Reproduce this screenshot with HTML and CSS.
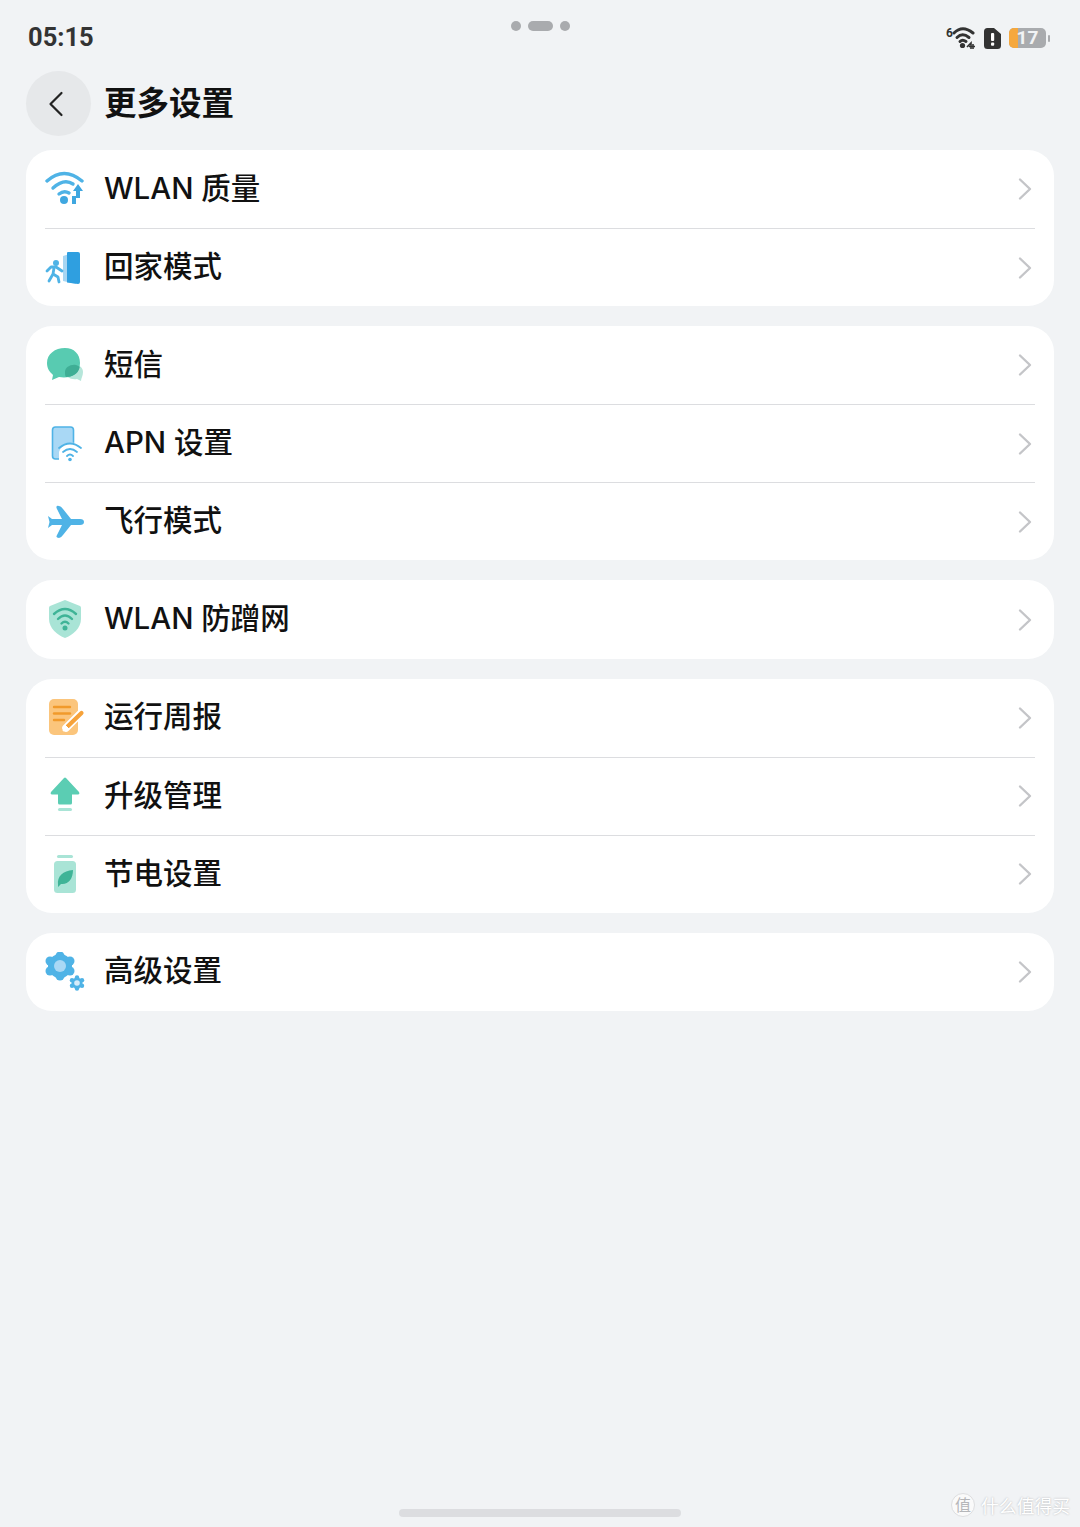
FILE: index.html
```html
<!DOCTYPE html>
<html lang="zh">
<head>
<meta charset="utf-8">
<title>更多设置</title>
<link rel="stylesheet" href="styles.css">
</head>
<body>
<svg class="defs" width="0" height="0" aria-hidden="true">
  <symbol id="chev" viewBox="0 0 16 24"><path d="M3 2.5 L13 12 L3 21.5" fill="none" stroke="#c4c5c8" stroke-width="2.4" stroke-linecap="round" stroke-linejoin="round"/></symbol>
</svg>
<div class="page">
  <div class="status">
    <span class="time">05:15</span>
    <div class="dots"><i class="dot"></i><i class="dot wide"></i><i class="dot"></i></div>
    <div class="status-icons">
      <svg width="30" height="24" viewBox="0 0 30 24">
        <text x="0" y="11" class="six">6</text>
        <g fill="none" stroke="#333" stroke-width="3" stroke-linecap="round">
          <path d="M8 7 Q16.5 -1.500 27 7"/><path d="M11 11.500 Q16.500 6 23 11.500"/><path d="M14 15.500 Q16.500 13 20 15.500"/>
        </g>
        <circle cx="16.500" cy="19.500" r="2.600" fill="#333"/>
        <path d="M21 21 L25 17 V23 M23 20.500 H29 M27 18 V23" fill="none" stroke="#333" stroke-width="1.600"/>
      </svg>
      <svg class="sim" width="17" height="21" viewBox="0 0 17 21">
        <path d="M3.500 0 H10 L17 6 V17.500 A3.500 3.500 0 0 1 13.500 21 H3.500 A3.500 3.500 0 0 1 0 17.500 V3.500 A3.500 3.500 0 0 1 3.500 0 Z" fill="#333"/>
        <rect x="7" y="5" width="3.200" height="8" rx="1" fill="#fff"/><rect x="7" y="14.500" width="3.200" height="3.200" rx="1" fill="#fff"/>
      </svg>
      <div class="battery"><span class="level"></span><span class="pct">17</span></div><i class="cap"></i>
    </div>
  </div>

  <header class="title-bar">
    <button class="back" aria-label="返回">
      <svg width="16" height="26" viewBox="0 0 16 26"><path d="M13.500 2 L2.500 13 L13.500 24" fill="none" stroke="#222" stroke-width="2.200" stroke-linecap="round" stroke-linejoin="round"/></svg>
    </button>
    <h1 class="title">更多设置</h1>
  </header>

  <main class="groups">
    <section class="card">
      <div class="row">
        <svg class="icon" viewBox="0 0 40 40">
          <g fill="none" stroke="#4fb3e6" stroke-width="3.400" stroke-linecap="round">
            <path d="M2 12 Q19 -3 37 12"/><path d="M8 19 Q19 9 28 15"/><path d="M14 25 Q19 21 24 24"/>
          </g>
          <circle cx="19" cy="31" r="4" fill="#3fa7e0"/>
          <path d="M27 35 V27 L31 27 V22 H28 L33 15 L38 22 H35 V29 H31 V35 Z" fill="#3fa7e0"/>
        </svg>
        <span class="label">WLAN 质量</span>
        <svg class="chev"><use href="#chev"/></svg>
      </div>
      <div class="row">
        <svg class="icon" viewBox="0 0 40 40">
          <path d="M18 8 L31 4 V36 L18 33 Z" fill="#a8d6f2"/>
          <path d="M22 5 Q22 4 23 4 H33 Q35 4 35 6 V34 Q35 36 33 36 L22 34.500 Z" fill="#2f9fe0"/>
          <circle cx="11" cy="15" r="3" fill="#4fb3e6"/>
          <path d="M2 23 L6 19 H11 L17 23 M9 20 L8 26 L13 29 L14 34 M8 26 L4 33" fill="none" stroke="#4fb3e6" stroke-width="2.800" stroke-linecap="round" stroke-linejoin="round"/>
        </svg>
        <span class="label">回家模式</span>
        <svg class="chev"><use href="#chev"/></svg>
      </div>
    </section>

    <section class="card">
      <div class="row">
        <svg class="icon" viewBox="0 0 40 40">
          <path d="M24 21 C31 18 38 21 38 27 C38 31 36 33 36 36 L32 34 C26 35 20 32 20 27 Z" fill="#b6e6da"/>
          <path d="M20 3 C10 3 2 9 2 18 C2 24 5 27 8 30 L7 35 L14 32 C24 34 35 30 35 18 C35 9 29 3 20 3 Z" fill="#58cbb1"/>
          <path d="M20 27 C20 22 26 19 31 20 C34 21 35 22 34.500 23 C33 29 27 32 21 32 C20 31 20 29 20 27 Z" fill="#3fae95"/>
        </svg>
        <span class="label">短信</span>
        <svg class="chev"><use href="#chev"/></svg>
      </div>
      <div class="row">
        <svg class="icon" viewBox="0 0 40 40">
          <rect x="7.500" y="3" width="21" height="32" rx="3" fill="#a9d8f5" stroke="#4fb3e6" stroke-width="1.600"/>
          <path d="M14 28 A14 14 0 0 1 38 24 V38 H14 Z" fill="#fff"/>
          <g fill="none" stroke="#4fb3e6" stroke-width="1.800" stroke-linecap="round">
            <path d="M14 24 Q25 15 36 24"/><path d="M18 28 Q25 22 32 28"/><path d="M22 32 Q25 29 28 32"/>
          </g>
          <circle cx="25" cy="35.500" r="1.800" fill="#4fb3e6"/>
        </svg>
        <span class="label">APN 设置</span>
        <svg class="chev"><use href="#chev"/></svg>
      </div>
      <div class="row">
        <svg class="icon" viewBox="0 0 40 40">
          <path d="M3 14 L7 17 H17 L11.500 6 Q11 3 14 4 Q16 4 18 7 L26 17 H35 Q39 17 39 20 Q39 23 35 23 H26 L18 33 Q16 36 14 36 Q11 36 11.500 34 L17 23 H7 L3 26 L4.500 20 Z" fill="#4fb3e6"/>
        </svg>
        <span class="label">飞行模式</span>
        <svg class="chev"><use href="#chev"/></svg>
      </div>
    </section>

    <section class="card">
      <div class="row">
        <svg class="icon" viewBox="0 0 40 40">
          <path d="M20 0 L35 6 Q36 6.500 36 8 V19 C36 28 28 35 20 38 C12 35 4 28 4 19 V8 Q4 6.500 5 6 Z" fill="#a9e4d6"/>
          <g fill="none" stroke="#3fb497" stroke-width="2.400" stroke-linecap="round">
            <path d="M9 14 Q20 4 31 14"/><path d="M13 19 Q20 12 27 19"/><path d="M16.500 23.500 Q20 20 23.500 23.500"/>
          </g>
          <circle cx="20" cy="28" r="2.500" fill="#3fb497"/>
        </svg>
        <span class="label">WLAN 防蹭网</span>
        <svg class="chev"><use href="#chev"/></svg>
      </div>
    </section>

    <section class="card">
      <div class="row">
        <svg class="icon" viewBox="0 0 40 40">
          <rect x="4" y="1" width="29" height="36" rx="5" fill="#fbc57c"/>
          <g fill="none" stroke="#f19a2b" stroke-width="2.400" stroke-linecap="round">
            <path d="M9 9 H25"/><path d="M9 15.500 H25"/><path d="M9 22 H19"/>
          </g>
          <path d="M21 30 L36 15" stroke="#fff" stroke-width="7.500" stroke-linecap="round"/>
          <path d="M22 29 L36.500 15" stroke="#f6a23a" stroke-width="4.200" stroke-linecap="round"/>
          <path d="M18 33 L20 27 L24 31 Z" fill="#fff" stroke="#fff" stroke-width="1" stroke-linejoin="round"/>
        </svg>
        <span class="label">运行周报</span>
        <svg class="chev"><use href="#chev"/></svg>
      </div>
      <div class="row">
        <svg class="icon" viewBox="0 0 40 40">
          <path d="M19 2 Q20 1 21 2 L34 16 Q35 18.500 33 18.500 H27 V27 Q27 28.500 25.500 28.500 H14.500 Q13 28.500 13 27 V18.500 H7 Q5 18.500 6 16 Z" fill="#5bcdb3"/>
          <rect x="13" y="32" width="14" height="3" rx="1.500" fill="#a9e4d6"/>
        </svg>
        <span class="label">升级管理</span>
        <svg class="chev"><use href="#chev"/></svg>
      </div>
      <div class="row">
        <svg class="icon" viewBox="0 0 40 40">
          <rect x="12" y="1" width="16" height="3" rx="1.500" fill="#a9e4d6"/>
          <rect x="9" y="7" width="22" height="32" rx="3.500" fill="#a9e4d6"/>
          <path d="M13 31 C12 22 18 17 28 16 C28 25 23 31 16 30 L13 33 Z" fill="#3fb497"/>
        </svg>
        <span class="label">节电设置</span>
        <svg class="chev"><use href="#chev"/></svg>
      </div>
    </section>

    <section class="card">
      <div class="row">
        <svg class="icon" viewBox="0 0 40 40">
          <g fill="#4fb3e6">
            <circle cx="15" cy="14" r="12"/>
            <circle cx="15" cy="4" r="4.500"/><circle cx="15" cy="24" r="4.500"/>
            <circle cx="5" cy="9" r="4.500"/><circle cx="25" cy="9" r="4.500"/>
            <circle cx="5" cy="19" r="4.500"/><circle cx="25" cy="19" r="4.500"/>
          </g>
          <circle cx="15" cy="14" r="6" fill="#a9d8f5"/>
          <g fill="#4fb3e6">
            <circle cx="32" cy="31" r="5.500"/>
            <circle cx="32" cy="25.500" r="2.200"/><circle cx="32" cy="36.500" r="2.200"/>
            <circle cx="27" cy="28.300" r="2.200"/><circle cx="37" cy="28.300" r="2.200"/>
            <circle cx="27" cy="33.700" r="2.200"/><circle cx="37" cy="33.700" r="2.200"/>
          </g>
          <circle cx="32" cy="31" r="2.800" fill="#d5ecfa"/>
        </svg>
        <span class="label">高级设置</span>
        <svg class="chev"><use href="#chev"/></svg>
      </div>
    </section>
  </main>

  <div class="home-bar"></div>
</div>
<div class="watermark"><span class="wm-badge">值</span><span class="wm-text">什么值得买</span></div>
</body>
</html>
```

FILE: styles.css
```css
* { box-sizing: border-box; }
html, body { margin: 0; padding: 0; }
body {
  width: 1080px;
  height: 1527px;
  background: #f1f3f5;
  font-family: "Noto Sans CJK SC", "Noto Sans", sans-serif;
  color: #111;
  overflow: hidden;
  position: relative;
}
.defs { position: absolute; }
.page { display: flex; flex-direction: column; height: 1527px; }

.status {
  height: 71px;
  padding: 0 30px 0 28px;
  display: grid;
  grid-template-columns: 1fr auto 1fr;
  align-items: start;
}
.time {
  font-family: Roboto, sans-serif;
  font-weight: 700;
  font-size: 25.500px;
  line-height: 30px;
  margin-top: 22px;
  color: #333;
}
.dots { display: flex; align-items: center; gap: 7px; margin: 21px 0 0 3px; }
.dot { width: 10px; height: 10px; border-radius: 5px; background: #a9abae; display: block; }
.dot.wide { width: 25px; }
.status-icons {
  justify-self: end;
  display: flex;
  align-items: center;
  gap: 5px;
  margin-top: 26px;
}
.six { font: 700 12px Roboto, sans-serif; fill: #333; }
.sim { margin-left: 3px; margin-right: 3px; }
.battery {
  position: relative;
  width: 37px;
  height: 20px;
  border-radius: 5px;
  background: #a9abae;
}
.level { position: absolute; left: 0; top: 0; bottom: 0; width: 9px; border-radius: 5px 0 0 5px; background: #f5a83e; }
.pct {
  position: absolute;
  left: 0;
  right: 0;
  top: 0;
  text-align: center;
  font: 700 19px/20px Roboto, sans-serif;
  color: #f1f3f5;
}
.cap { width: 2px; height: 7px; border-radius: 1px; background: #a9abae; margin-left: -3px; display: block; }

.title-bar {
  display: flex;
  align-items: center;
  gap: 13px;
  padding-left: 26px;
  height: 65px;
  margin-bottom: 14px;
}
.back {
  width: 65px;
  height: 65px;
  border: 0;
  padding: 0 5px 0 0;
  border-radius: 50%;
  background: #e6e8ea;
  display: flex;
  align-items: center;
  justify-content: center;
}
.title { margin: 0 0 6px; font-size: 32.500px; font-weight: 700; line-height: 48px; color: #111; }

.groups { display: flex; flex-direction: column; gap: 20px; padding: 0 26px; }
.card { background: #fff; border-radius: 26px; overflow: hidden; }
.row {
  height: 78.100px;
  margin: 0 19px;
  display: flex;
  align-items: center;
  border-top: 1px solid #dcdde0;
}
.row:first-child { border-top: 0; }
.icon { width: 40px; height: 40px; flex: none; }
.label {
  flex: 1;
  margin: 0 0 3px 19px;
  font-family: Inter, "Noto Sans CJK SC", sans-serif;
  font-size: 29.500px;
  font-weight: 500;
  line-height: 40px;
  color: #111;
  white-space: nowrap;
}
.chev { width: 16px; height: 24px; flex: none; margin-right: 2px; }

.home-bar {
  width: 282px;
  height: 8px;
  border-radius: 4px;
  background: #dcdde0;
  margin: auto auto 10px;
}
.watermark {
  position: absolute;
  right: 10px;
  bottom: 10px;
  display: flex;
  align-items: center;
  gap: 6px;
}
.wm-badge {
  width: 24px;
  height: 24px;
  border-radius: 50%;
  background: #fafafa;
  color: #b5b6b9;
  border: 1px solid #dddee0;
  font-size: 16px;
  line-height: 21px;
  text-align: center;
}
.wm-text { font-size: 17.800px; line-height: 24px; color: #fff; text-shadow: 0 0 2px #aeafb2; }
```
